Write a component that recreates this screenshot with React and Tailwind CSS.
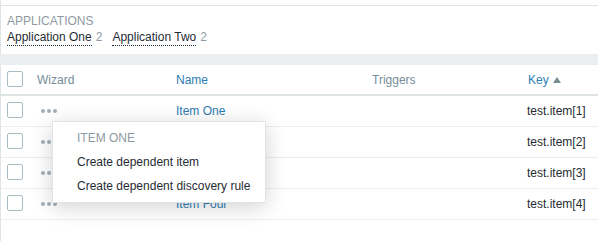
import React from "react"

const apps = [
  { name: "Application One", count: 2 },
  { name: "Application Two", count: 2 },
]

const items = [
  { name: "Item One", key: "test.item[1]" },
  { name: "Item Two", key: "test.item[2]" },
  { name: "Item Three", key: "test.item[3]" },
  { name: "Item Four", key: "test.item[4]" },
]

const cols = "grid grid-cols-[36px_139px_196px_155px_1fr] items-center"

function Checkbox() {
  return <span className="block w-4 h-4 border border-[#acbbc2] rounded-[2px] bg-white" />
}

function Dots() {
  return (
    <span className="flex gap-[2px]">
      <span className="w-1 h-1 rounded-full bg-[#a3afb6]" />
      <span className="w-1 h-1 rounded-full bg-[#a3afb6]" />
      <span className="w-1 h-1 rounded-full bg-[#a3afb6]" />
    </span>
  )
}

export default function App() {
  return (
    <div className="w-[598px] h-[241px] overflow-hidden bg-[#ebeef0] text-[12px] leading-[14px] text-[#1f2c33] font-['Liberation_Sans',Arial,sans-serif]">

      {/* top strip */}
      <div className="h-[5px] bg-white border-l border-[#dfe4e7]" />

      {/* APPLICATIONS filter */}
      <div className="bg-white border-t border-l border-[#dfe4e7] h-[49px] pl-[6px] pt-[8px]">
        <div className="text-[#8e9aa3] uppercase">Applications</div>
        <div className="flex mt-[2px]">
          {apps.map((a) => (
            <span key={a.name} className="mr-[10px]">
              <span className="inline-block pb-[1px] border-b border-dotted border-[#1f2c33]">{a.name}</span>
              <span className="text-[#8e9aa3] ml-[4px]">{a.count}</span>
            </span>
          ))}
        </div>
      </div>

      {/* TABLE */}
      <div className="relative mt-[11px] bg-white border-l border-[#dfe4e7] h-[176px]">

        <div className={`${cols} h-[31px] border-b-2 border-[#dfe4e7]`}>
          <div className="pl-[6px] -mt-[1px]"><Checkbox /></div>
          <div className="text-[#768d99]">Wizard</div>
          <div className="text-[#2f7db3]">Name</div>
          <div className="text-[#768d99]">Triggers</div>
          <div className="flex items-center text-[#2f7db3] pl-[1px]">
            Key
            <svg width="8" height="6" viewBox="0 0 8 6" className="ml-[4px]">
              <path d="M0 6 L4 0 L8 6 Z" fill="#7a8c96" />
            </svg>
          </div>
        </div>

        {items.map((it) => (
          <div key={it.key} className={`${cols} h-[31px] border-b border-[#ebeef0]`}>
            <div className="pl-[6px] -mt-[2px]"><Checkbox /></div>
            <div className="pl-[4px]"><Dots /></div>
            <div className="text-[#2f7db3]">{it.name}</div>
            <div />
            <div>{it.key}</div>
          </div>
        ))}

        {/* CONTEXT MENU */}
        <div className="absolute left-[51px] top-[56px] w-[214px] h-[82px] bg-white border border-[#dfe4e7] shadow-[0_4px_20px_rgba(0,0,0,0.18)] py-[4px] pl-[24px]">
          <div className="h-[24px] flex items-center text-[#8e9aa3] uppercase">Item One</div>
          <div className="h-[24px] flex items-center">Create dependent item</div>
          <div className="h-[24px] flex items-center">Create dependent discovery rule</div>
        </div>

      </div>
    </div>
  )
}
